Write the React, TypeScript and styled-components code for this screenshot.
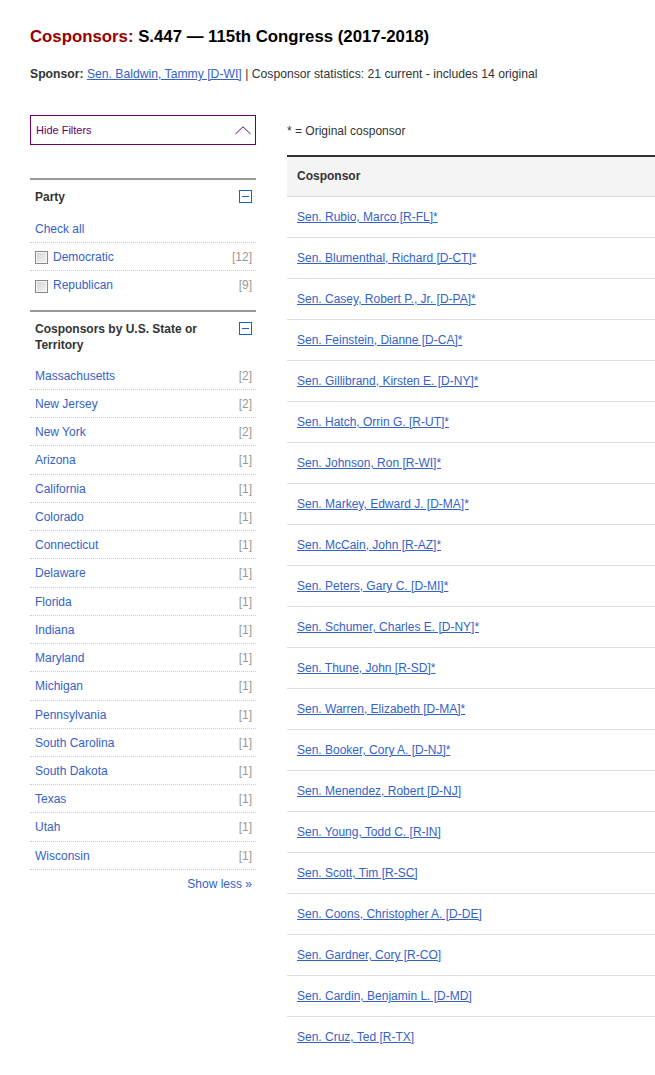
import React from "react";
import styled, { createGlobalStyle } from "styled-components";

const GlobalStyle = createGlobalStyle`
  html, body { margin: 0; padding: 0; background: #fff; }
  body {
    font-family: "Liberation Sans", Arial, sans-serif;
    color: #333;
    overflow: hidden;
  }
  * { box-sizing: border-box; }
`;

const LINK = "#3462c9";

const Page = styled.div`
  padding: 0 0 0 30px;
  width: 655px;
`;

const Title = styled.h1`
  margin: 27px 0 0;
  font-size: 16.8px;
  line-height: 20px;
  font-weight: bold;
  color: #000;
`;

const TitleLabel = styled.span`
  color: #990000;
`;

const SponsorLine = styled.p`
  margin: 19px 0 0;
  font-size: 12.2px;
  line-height: 16px;
  color: #333;
`;

const Strong = styled.strong`
  font-weight: bold;
`;

const Link = styled.a`
  color: ${LINK};
  text-decoration: underline;
`;

const Main = styled.div`
  display: flex;
  gap: 31px;
  margin-top: 33px;
  align-items: flex-start;
`;

const Sidebar = styled.aside`
  width: 226px;
  flex: none;
  display: flex;
  flex-direction: column;
`;

const HideFilters = styled.button`
  height: 30px;
  width: 100%;
  border: 1px solid #660066;
  background: #fff;
  color: #660066;
  font-family: "Liberation Sans", Arial, sans-serif;
  font-size: 11px;
  padding: 0 4px 0 5px;
  display: flex;
  align-items: center;
  justify-content: space-between;
  cursor: pointer;
`;

const Section = styled.section<{ $gap: number }>`
  margin-top: ${(p) => p.$gap}px;
  border-top: 2px solid #999;
`;

const SectionHeader = styled.div<{ $pb: number }>`
  display: flex;
  justify-content: space-between;
  align-items: flex-start;
  gap: 20px;
  padding: 9px 4px ${(p) => p.$pb}px 5px;
`;

const SectionTitle = styled.h3`
  margin: 0;
  font-size: 12px;
  line-height: 16px;
  font-weight: bold;
  color: #333;
`;

const MinusBox = styled.span`
  flex: none;
  width: 13px;
  height: 13px;
  margin-top: 1px;
  border: 1px solid #1565c0;
  display: flex;
  align-items: center;
  justify-content: center;
  &::after {
    content: "";
    width: 7px;
    height: 1px;
    background: #1565c0;
  }
`;

const FilterList = styled.ul`
  list-style: none;
  margin: 0;
  padding: 0;
`;

const FilterRow = styled.li<{ $last?: boolean }>`
  display: flex;
  align-items: center;
  justify-content: space-between;
  padding: 6px 4px 4px 5px;
  font-size: 12px;
  line-height: 17.24px;
  border-bottom: ${(p) => (p.$last ? "1px solid transparent" : "1px dotted #ccc")};
`;

const FilterLabel = styled.span`
  display: flex;
  align-items: center;
  color: ${LINK};
`;

const Count = styled.span`
  color: #999;
`;

const Checkbox = styled.span`
  width: 13px;
  height: 13px;
  margin-right: 5px;
  border: 1px solid #8a8a8a;
  background: linear-gradient(135deg, #d4d4d4 0%, #f4f4f4 100%);
  box-shadow: inset 0 0 0 1px #f6f6f6;
`;

const ShowLess = styled.div`
  text-align: right;
  padding: 6px 4px 0 0;
  font-size: 12px;
  line-height: 16px;
  color: ${LINK};
`;

const Content = styled.div`
  flex: 1;
  min-width: 0;
`;

const Legend = styled.p`
  margin: 0 0 16px;
  padding-top: 8px;
  font-size: 12px;
  line-height: 16px;
  color: #333;
`;

const Table = styled.table`
  width: 100%;
  border-collapse: collapse;
  border-top: 2px solid #333;
  font-size: 12px;
`;

const HeadCell = styled.th`
  text-align: left;
  background: #f4f4f4;
  padding: 11px 10px 12px;
  line-height: 16px;
  font-weight: bold;
  color: #333;
  border-bottom: 1px solid #ddd;
`;

const Row = styled.tr`
  border-bottom: 1px solid #ddd;
  &:last-child { border-bottom: none; }
`;

const Cell = styled.td`
  padding: 12px 10px 12px;
  line-height: 16px;
`;

const Chevron = () => (
  <svg width="16" height="9" viewBox="0 0 16 9" fill="none">
    <polyline points="0.5,8 8,0.8 15.5,8" stroke="#660066" strokeWidth="1" />
  </svg>
);

const party = [
  { name: "Democratic", count: 12 },
  { name: "Republican", count: 9 },
];

const states: [string, number][] = [
  ["Massachusetts", 2],
  ["New Jersey", 2],
  ["New York", 2],
  ["Arizona", 1],
  ["California", 1],
  ["Colorado", 1],
  ["Connecticut", 1],
  ["Delaware", 1],
  ["Florida", 1],
  ["Indiana", 1],
  ["Maryland", 1],
  ["Michigan", 1],
  ["Pennsylvania", 1],
  ["South Carolina", 1],
  ["South Dakota", 1],
  ["Texas", 1],
  ["Utah", 1],
  ["Wisconsin", 1],
];

const cosponsors = [
  "Sen. Rubio, Marco [R-FL]*",
  "Sen. Blumenthal, Richard [D-CT]*",
  "Sen. Casey, Robert P., Jr. [D-PA]*",
  "Sen. Feinstein, Dianne [D-CA]*",
  "Sen. Gillibrand, Kirsten E. [D-NY]*",
  "Sen. Hatch, Orrin G. [R-UT]*",
  "Sen. Johnson, Ron [R-WI]*",
  "Sen. Markey, Edward J. [D-MA]*",
  "Sen. McCain, John [R-AZ]*",
  "Sen. Peters, Gary C. [D-MI]*",
  "Sen. Schumer, Charles E. [D-NY]*",
  "Sen. Thune, John [R-SD]*",
  "Sen. Warren, Elizabeth [D-MA]*",
  "Sen. Booker, Cory A. [D-NJ]*",
  "Sen. Menendez, Robert [D-NJ]",
  "Sen. Young, Todd C. [R-IN]",
  "Sen. Scott, Tim [R-SC]",
  "Sen. Coons, Christopher A. [D-DE]",
  "Sen. Gardner, Cory [R-CO]",
  "Sen. Cardin, Benjamin L. [D-MD]",
  "Sen. Cruz, Ted [R-TX]",
];

export default function App() {
  return (
    <Page>
      <GlobalStyle />
      <Title>
        <TitleLabel>Cosponsors:</TitleLabel> S.447 — 115th Congress (2017-2018)
      </Title>
      <SponsorLine>
        <Strong>Sponsor:</Strong> <Link href="#">Sen. Baldwin, Tammy [D-WI]</Link> | Cosponsor
        statistics: 21 current - includes 14 original
      </SponsorLine>
      <Main>
        <Sidebar>
          <HideFilters type="button">
            <span>Hide Filters</span>
            <Chevron />
          </HideFilters>
          <Section $gap={33}>
            <SectionHeader $pb={10}>
              <SectionTitle>Party</SectionTitle>
              <MinusBox />
            </SectionHeader>
            <FilterList>
              <FilterRow>
                <FilterLabel>Check all</FilterLabel>
              </FilterRow>
              {party.map((p, i) => (
                <FilterRow key={p.name} $last={i === party.length - 1}>
                  <FilterLabel>
                    <Checkbox />
                    {p.name}
                  </FilterLabel>
                  <Count>[{p.count}]</Count>
                </FilterRow>
              ))}
            </FilterList>
          </Section>
          <Section $gap={10}>
            <SectionHeader $pb={9}>
              <SectionTitle>Cosponsors by U.S. State or Territory</SectionTitle>
              <MinusBox />
            </SectionHeader>
            <FilterList>
              {states.map(([name, count]) => (
                <FilterRow key={name}>
                  <FilterLabel>{name}</FilterLabel>
                  <Count>[{count}]</Count>
                </FilterRow>
              ))}
            </FilterList>
            <ShowLess>Show less »</ShowLess>
          </Section>
        </Sidebar>
        <Content>
          <Legend>* = Original cosponsor</Legend>
          <Table>
            <thead>
              <tr>
                <HeadCell>Cosponsor</HeadCell>
              </tr>
            </thead>
            <tbody>
              {cosponsors.map((c) => (
                <Row key={c}>
                  <Cell>
                    <Link href="#">{c}</Link>
                  </Cell>
                </Row>
              ))}
            </tbody>
          </Table>
        </Content>
      </Main>
    </Page>
  );
}
